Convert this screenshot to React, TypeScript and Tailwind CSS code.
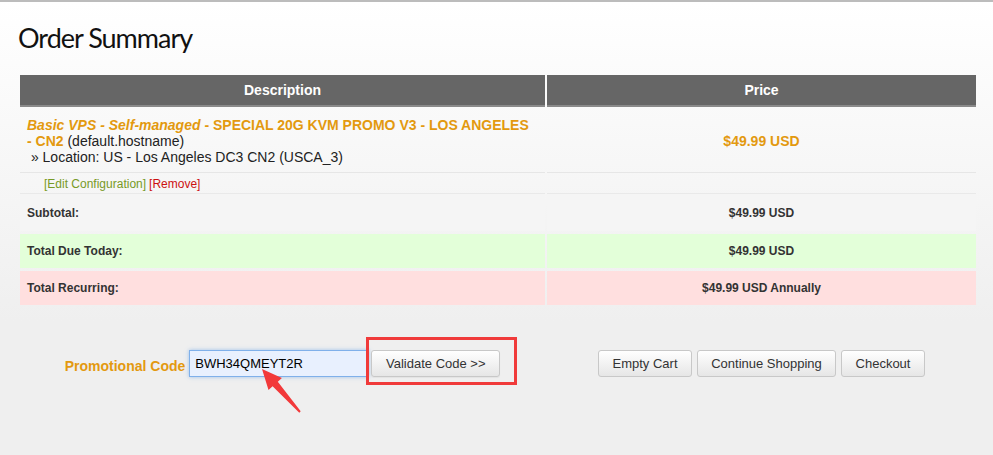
export default function App() {
  const orange = "text-[#e3990f]";
  return (
    <div className="relative min-h-[455px] w-full border-t-2 border-[#bcbcbc] bg-[linear-gradient(to_bottom,#ffffff_0px,#efefef_320px,#efefef_100%)] font-['Liberation_Sans',Arial,sans-serif] text-[#222] overflow-hidden">
      <div className="pl-[20px] pr-[17px]">
        <h1 className="h-[73px] pt-[19px] -ml-[2px] font-['Lato',sans-serif] text-[27px] tracking-[-1px] leading-[34px] font-normal text-[#111]">
          Order Summary
        </h1>

        <div className="grid grid-cols-[525px_429px] gap-x-[2px]">
          {/* header */}
          <div className="h-[32px] bg-[#666] border-b-2 border-[#8a8a8a] flex items-center justify-center text-white font-bold text-[14px]">
            Description
          </div>
          <div className="h-[32px] bg-[#666] border-b-2 border-[#8a8a8a] flex items-center justify-center text-white font-bold text-[14px]">
            Price
          </div>

          {/* product row */}
          <div className="h-[66px] border-b border-[#e6e6e6] pl-[7px] pt-[10px] text-[14px] leading-[16px]">
            <span className={`${orange} font-bold italic`}>Basic VPS - Self-managed</span>
            <span className={`${orange} font-bold`}>
              {" "}- SPECIAL 20G KVM PROMO V3 - LOS ANGELES{" "}
              <span className="whitespace-nowrap">- CN2</span>
            </span>{" "}
            (default.hostname)
            <br />
            {"\u00a0"}» Location: US - Los Angeles DC3 CN2 (USCA_3)
          </div>
          <div className={`h-[66px] border-b border-[#e6e6e6] pt-[4px] flex items-center justify-center font-bold text-[14px] ${orange}`}>
            $49.99 USD
          </div>

          {/* edit row */}
          <div className="h-[21px] border-b border-[#e9e9e9] pl-[24px] pt-[1px] flex items-center text-[12px]">
            <span className="text-[#789a26]">[Edit Configuration]</span>
            <span className="ml-[3px] text-[#cc1111]">[Remove]</span>
          </div>
          <div className="h-[21px] border-b border-[#e9e9e9]"></div>

          {/* subtotal */}
          <div className="h-[37px] bg-[#f5f5f5] pl-[7px] flex items-center text-[12px] font-bold text-[#333]">
            Subtotal:
          </div>
          <div className="h-[37px] bg-[#f5f5f5] flex items-center justify-center text-[12px] font-bold text-[#333]">
            $49.99 USD
          </div>

          <div className="mt-[3px] h-[34px] bg-[#e3ffd9] pl-[7px] flex items-center text-[12px] font-bold text-[#333]">
            Total Due Today:
          </div>
          <div className="mt-[3px] h-[34px] bg-[#e3ffd9] flex items-center justify-center text-[12px] font-bold text-[#333]">
            $49.99 USD
          </div>

          <div className="mt-[3px] h-[34px] bg-[#ffdfdf] pl-[7px] flex items-center text-[12px] font-bold text-[#333]">
            Total Recurring:
          </div>
          <div className="mt-[3px] h-[34px] bg-[#ffdfdf] flex items-center justify-center text-[12px] font-bold text-[#333]">
            $49.99 USD Annually
          </div>

          {/* promo / actions */}
          <div className="pt-[45px] flex items-center justify-center">
            <span className={`${orange} font-bold text-[14px] mr-[4px] pt-[6px]`}>Promotional Code</span>
            <div className="w-[180px] h-[27px] border border-[#7fb0ea] bg-[#e8f0fe] shadow-[0_0_4px_rgba(102,160,230,0.6)] flex items-center pl-[5px] text-[13px] text-black">
              BWH34QMEYT2R
            </div>
            <div className="relative ml-[2px]">
              <button className="w-[129px] h-[27px] rounded-[3px] border border-[#c8c8c8] bg-[linear-gradient(to_bottom,#ffffff,#e6e6e6)] text-[13px] text-[#333] shadow-[0_1px_1px_rgba(0,0,0,0.05)]">
                Validate Code &gt;&gt;
              </button>
              <div className="absolute left-[-5px] top-[-13px] w-[151px] h-[48px] border-[3px] border-[#f03a3a] pointer-events-none"></div>
            </div>
          </div>
          <div className="pt-[45px] flex items-center justify-center gap-[5px]">
            <button className="w-[94px] h-[27px] rounded-[3px] border border-[#c8c8c8] bg-[linear-gradient(to_bottom,#ffffff,#e6e6e6)] text-[13px] text-[#333]">
              Empty Cart
            </button>
            <button className="w-[139px] h-[27px] rounded-[3px] border border-[#c8c8c8] bg-[linear-gradient(to_bottom,#ffffff,#e6e6e6)] text-[13px] text-[#333]">
              Continue Shopping
            </button>
            <button className="w-[84px] h-[27px] rounded-[3px] border border-[#c8c8c8] bg-[linear-gradient(to_bottom,#ffffff,#e6e6e6)] text-[13px] text-[#333]">
              Checkout
            </button>
          </div>
        </div>
      </div>

      {/* annotation arrow */}
      <svg
        className="absolute left-[255px] top-[360px] w-[50px] h-[52px] pointer-events-none"
        viewBox="255 358 50 52"
      >
        <polygon
          points="262,365 281.9,374 277.8,377.7 300.7,407.3 299.3,408.7 272.6,382.3 268.5,386"
          fill="#f2393a"
        />
      </svg>
    </div>
  );
}
